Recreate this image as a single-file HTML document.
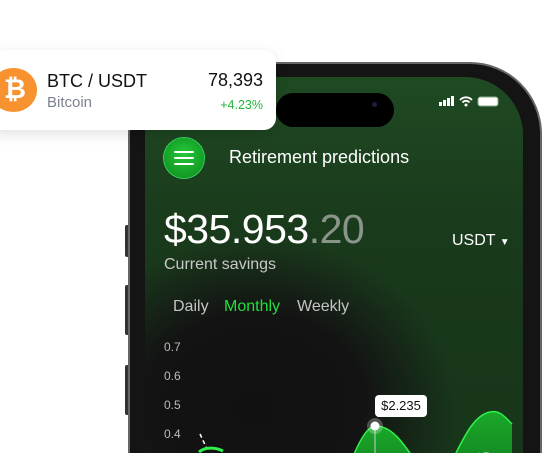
<!DOCTYPE html>
<html style="margin:0;width:542px;height:453px;overflow:hidden"><head><style>
body{margin:0;width:542px;height:453px;overflow:hidden;background:#fff;position:relative;font-family:"Liberation Sans",sans-serif}
.wrap{position:absolute;left:0;top:0;width:542px;height:453px;overflow:hidden}
.frame{position:absolute;left:128px;top:62px;width:414px;height:391px;border-radius:72px 72px 0 0;background:#141414;border:2px solid #666;border-bottom:none;box-sizing:border-box}
.btn{position:absolute;left:125px;width:4px;background:#333;border-radius:2px}
.screen{position:absolute;left:145px;top:77px;width:378px;height:376px;border-radius:58px 58px 0 0;overflow:hidden;
background:radial-gradient(ellipse 200px 170px at 110px 330px,#111 0%,#131313 55%,rgba(19,19,19,0) 100%),linear-gradient(180deg,#1f4a22 0%,#1a3a1c 40%,#17351a 100%)}
.island{position:absolute;left:131px;top:16px;width:118px;height:34px;border-radius:17px;background:#000}
.t{position:absolute;color:#fff;white-space:nowrap}
.card{position:absolute;left:-10px;top:50px;width:286px;height:80px;background:#fff;border-radius:12px;box-shadow:0 4px 14px rgba(0,0,0,.12)}
</style></head><body><div class="wrap">
<div class="btn" style="top:225px;height:32px"></div>
<div class="btn" style="top:285px;height:50px"></div>
<div class="btn" style="top:365px;height:50px"></div>
<div class="frame"></div>
<div class="screen">
 <div class="island"></div>
 <div style="position:absolute;left:227px;top:25px;width:5px;height:5px;border-radius:50%;background:#1a2040"></div>
 <svg style="position:absolute;left:294px;top:18px" width="70" height="14">
  <rect x="0" y="7" width="3" height="4" fill="#fff"/><rect x="4" y="5" width="3" height="6" fill="#fff"/><rect x="8" y="3" width="3" height="8" fill="#fff"/><rect x="12" y="1" width="3" height="10" fill="#fff"/>
  <path d="M21 5a8 8 0 0 1 12 0M23.5 7.5a4.5 4.5 0 0 1 7 0" stroke="#fff" stroke-width="1.8" fill="none"/><circle cx="27" cy="10" r="1.5" fill="#fff"/>
  <rect x="39" y="2" width="20" height="9" rx="2.5" fill="#fff" stroke="#8a8" stroke-width="1"/>
 </svg>
 <div style="position:absolute;left:19px;top:61px;width:40px;height:40px;border-radius:50%;background:radial-gradient(circle at 50% 40%,#22c83a,#0e8a1c);box-shadow:0 0 0 1px #3d6"></div>
 <svg style="position:absolute;left:29px;top:73px" width="20" height="16"><path d="M1 2h18M1 8h18M1 14h18" stroke="#fff" stroke-width="2" stroke-linecap="round"/></svg>
 <div class="t" style="left:84px;top:70px;font-size:18px">Retirement predictions</div>
 <div class="t" style="left:19px;top:129px;font-size:41px;letter-spacing:-0.5px">$35.953<span style="color:#8a958a">.20</span></div>
 <div class="t" style="left:19px;top:179px;font-size:16px;color:#c8c8c8">Current savings</div>
 <div class="t" style="left:307px;top:155px;font-size:16px">USDT <span style="font-size:10px">▼</span></div>
 <div class="t" style="left:28px;top:221px;font-size:16px;color:#c4c4c4">Daily</div>
 <div class="t" style="left:79px;top:221px;font-size:16px;color:#22e03a">Monthly</div>
 <div class="t" style="left:152px;top:221px;font-size:16px;color:#c4c4c4">Weekly</div>
 <div class="t" style="left:19px;top:263px;font-size:12px;color:#bbb">0.7</div>
 <div class="t" style="left:19px;top:292px;font-size:12px;color:#bbb">0.6</div>
 <div class="t" style="left:19px;top:321px;font-size:12px;color:#bbb">0.5</div>
 <div class="t" style="left:19px;top:350px;font-size:12px;color:#bbb">0.4</div>
 <svg style="position:absolute;left:0;top:300px" width="378" height="76">
  <defs><linearGradient id="g" x1="0" y1="0" x2="0" y2="1"><stop offset="0" stop-color="#1aa82a"/><stop offset="1" stop-color="#0c5a16"/></linearGradient>
  <linearGradient id="l" x1="0" x2="1"><stop offset="0" stop-color="#fff" stop-opacity="0"/><stop offset="1" stop-color="#fff" stop-opacity=".6"/></linearGradient></defs>
  <line x1="55" y1="49" x2="230" y2="49" stroke="url(#l)" stroke-width="1"/>
  <path d="M180 160 C200 100 215 50 230 49 C255 48 270 90 290 110 L290 160Z" fill="url(#g)"/>
  <path d="M180 160 C200 100 215 50 230 49 C255 48 270 90 290 110" stroke="#2ef048" stroke-width="1.5" fill="none"/>
  <path d="M290 110 C310 90 320 40 345 35 C355 33 360 40 367 47 L367 160 L290 160Z" fill="url(#g)"/>
  <path d="M290 110 C310 90 320 40 345 35 C355 33 360 40 367 47" stroke="#2ef048" stroke-width="1.5" fill="none"/>
  <path d="M280 112 C300 80 330 70 367 80" stroke="#fff" stroke-width="1.5" stroke-dasharray="5 4" fill="none"/>
  <path d="M55 57 L62 72" stroke="#fff" stroke-width="1.5" stroke-dasharray="4 3"/>
  <path d="M54 75 C60 70 70 70 78 74" stroke="#2ef048" stroke-width="3" fill="none"/>
  <line x1="230" y1="49" x2="230" y2="140" stroke="#ccc" stroke-width="1"/>
  <circle cx="230" cy="49" r="8" fill="#fff" fill-opacity=".25"/><circle cx="230" cy="49" r="4.5" fill="#fff"/>
 </svg>
 <div style="position:absolute;left:230px;top:318px;width:52px;height:22px;background:#fff;border-radius:4px;font-size:13px;color:#111;text-align:center;line-height:22px">$2.235</div>
</div>
<div class="card">
 <div style="position:absolute;left:0;top:18px;width:47px;height:44px;border-radius:50%;background:#f7922f"></div>
 <div style="position:absolute;left:14px;top:24px;font-size:27px;font-weight:bold;color:#fff">₿</div>
 <div class="t" style="left:57px;top:21px;font-size:18px;color:#111">BTC / USDT</div>
 <div class="t" style="left:57px;top:44px;font-size:15px;color:#7c8290">Bitcoin</div>
 <div class="t" style="right:13px;top:20px;font-size:18px;color:#111">78,393</div>
 <div class="t" style="right:13px;top:48px;font-size:12.5px;color:#24b53a">+4.23%</div>
</div>
</div></body></html>
